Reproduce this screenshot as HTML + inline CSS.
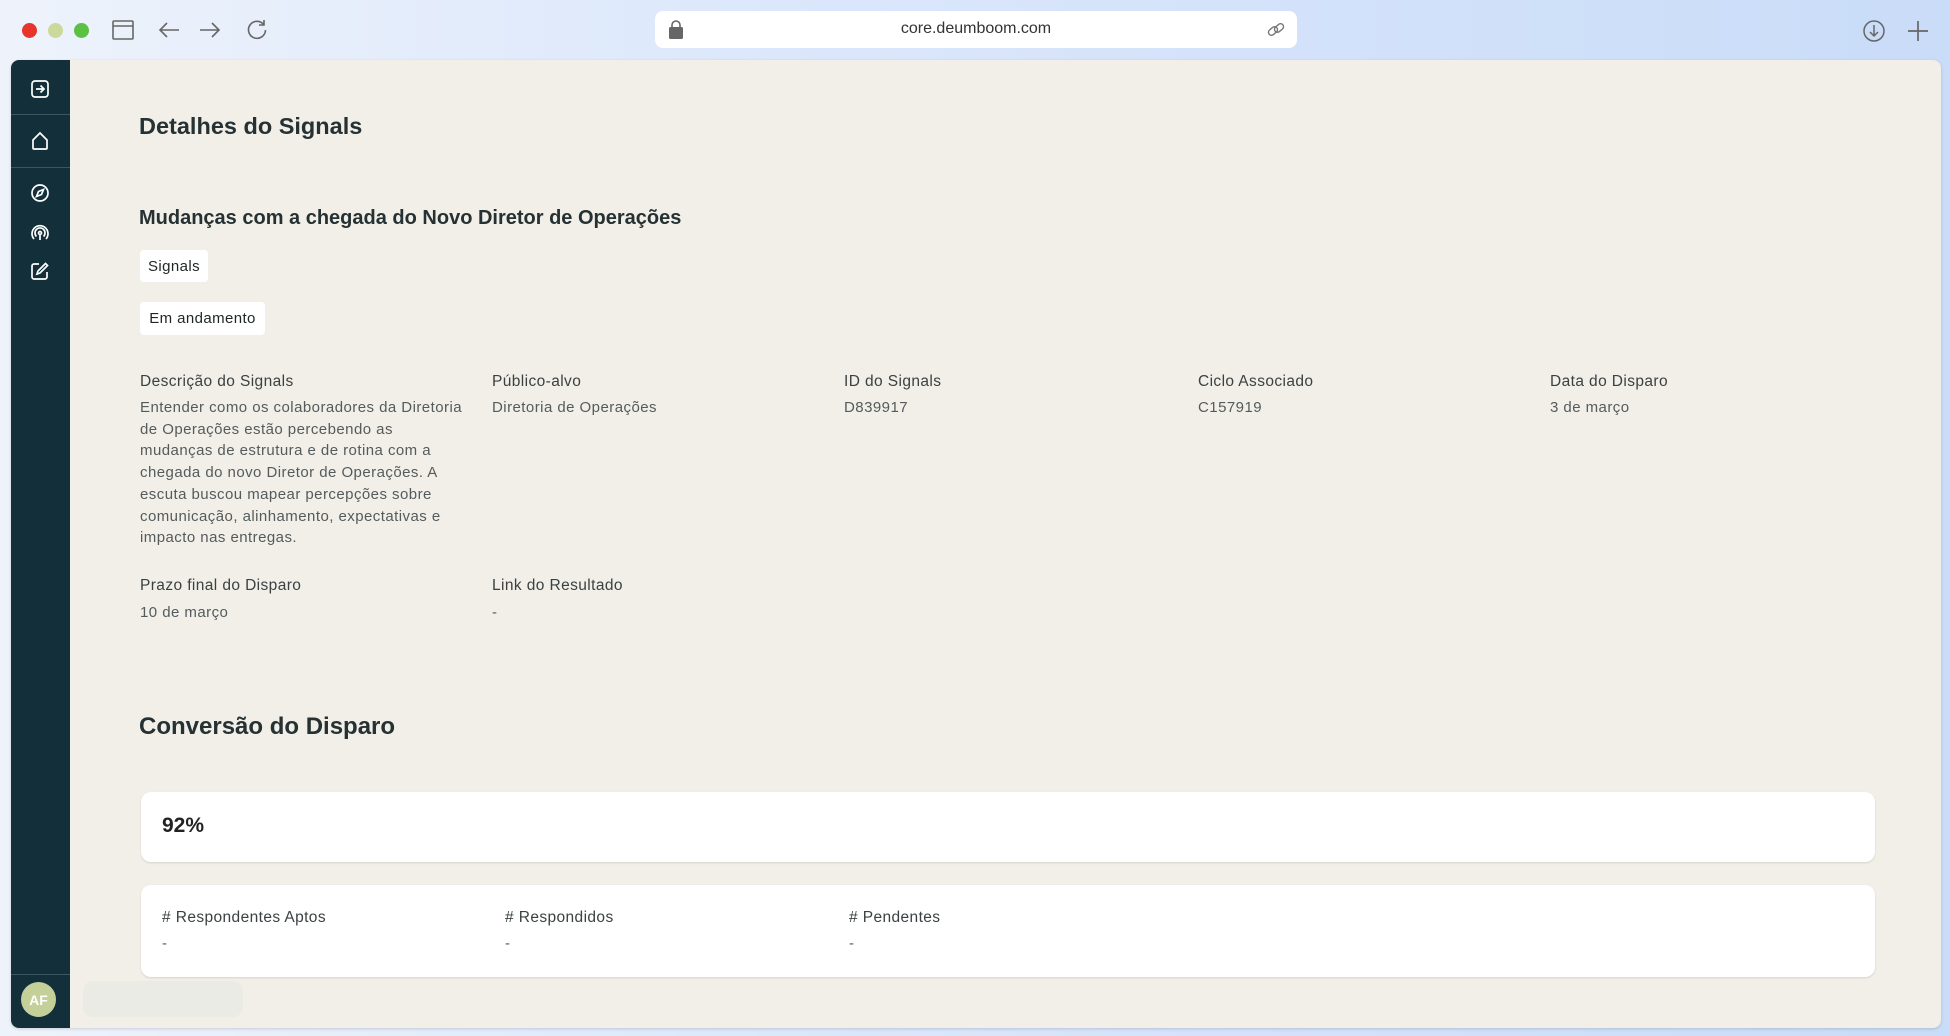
<!DOCTYPE html>
<html><head><meta charset="utf-8"><style>
*{box-sizing:border-box;margin:0;padding:0}
body{width:1950px;height:1036px;overflow:hidden;font-family:"Liberation Sans",sans-serif;background:linear-gradient(90deg,#eef3fb 0%,#dbe7fb 40%,#c9dcf8 100%);position:relative;color:#2b3233}
.abs{position:absolute}
.dot{position:absolute;top:23px;width:15px;height:15px;border-radius:50%}
.win{position:absolute;left:11px;top:60px;width:1930px;height:968px;background:#f1efe8;border-radius:8px;overflow:hidden;box-shadow:0 1px 3px rgba(0,0,0,.15)}
.side{position:absolute;left:0;top:0;width:59px;height:100%;background:#13303a}
.sep{position:absolute;left:0;width:59px;height:1px;background:#3d565e}
.ico{position:absolute;left:19px}
.lab{position:absolute;font-size:15.5px;color:#3b4142;letter-spacing:0.4px}
.val{position:absolute;font-size:15px;color:#555b5c;line-height:21.7px;letter-spacing:0.45px}
.tag{position:absolute;background:#fff;border-radius:4px;font-size:15px;color:#1f2626;display:flex;align-items:center;justify-content:center;letter-spacing:0.4px}
.card{position:absolute;left:130px;width:1734px;background:#fff;border-radius:10px;box-shadow:0 1px 2px rgba(0,0,0,.12)}
h{position:absolute;font-weight:bold;color:#263133}
</style></head><body>
<div class="dot" style="left:22px;background:#e8352b"></div>
<div class="dot" style="left:48px;background:#cdd99a"></div>
<div class="dot" style="left:74px;background:#5ac142"></div>
<svg class="abs" style="left:112px;top:20px" width="22" height="20" viewBox="0 0 22 20" fill="none" stroke="#666" stroke-width="1.6"><rect x="1" y="1" width="20" height="18" rx="1"/><line x1="1" y1="6" x2="21" y2="6"/></svg>
<svg class="abs" style="left:158px;top:20px" width="22" height="20" viewBox="0 0 22 20" fill="none" stroke="#666" stroke-width="1.6"><path d="M21 10H2M9 3L2 10l7 7"/></svg>
<svg class="abs" style="left:199px;top:20px" width="22" height="20" viewBox="0 0 22 20" fill="none" stroke="#666" stroke-width="1.6"><path d="M1 10h19M13 3l7 7-7 7"/></svg>
<svg class="abs" style="left:246px;top:19px" width="22" height="22" viewBox="0 0 22 22" fill="none" stroke="#666" stroke-width="1.6"><path d="M18 6A8.5 8.5 0 1 0 19.5 11M18 1v5h-5"/></svg>
<div class="abs" style="left:655px;top:11px;width:642px;height:37px;background:#fff;border-radius:8px"></div>
<svg class="abs" style="left:668px;top:20px" width="16" height="19" viewBox="0 0 16 19"><path d="M4 7V5a4 4 0 0 1 8 0v2" fill="none" stroke="#666" stroke-width="1.6"/><rect x="1" y="7" width="14" height="12" rx="1.5" fill="#666"/></svg>
<div class="abs" style="left:655px;width:642px;top:20px;text-align:center;font-size:16px;color:#333">core.deumboom.com</div>
<svg class="abs" style="left:1266px;top:21px" width="20" height="18" viewBox="0 0 20 18" fill="none" stroke="#777" stroke-width="1.4"><rect x="2" y="7" width="10" height="6" rx="3" transform="rotate(-40 7 10)"/><rect x="8" y="4" width="10" height="6" rx="3" transform="rotate(-40 13 7)"/></svg>
<svg class="abs" style="left:1862px;top:19px" width="24" height="24" viewBox="0 0 24 24" fill="none" stroke="#666" stroke-width="1.5"><circle cx="12" cy="12" r="10"/><path d="M12 6v11M8 13l4 4 4-4"/></svg>
<svg class="abs" style="left:1907px;top:20px" width="22" height="22" viewBox="0 0 22 22" stroke="#666" stroke-width="1.7"><path d="M11 1v20M1 11h20"/></svg>

<div class="win">
 <div class="side">
  <svg class="ico" style="top:19px" width="20" height="20" viewBox="0 0 20 20" fill="none" stroke="#fff" stroke-width="1.7"><rect x="2" y="2" width="16" height="16" rx="3"/><path d="M6 10h8M10.5 6.5L14 10l-3.5 3.5"/></svg>
  <div class="sep" style="top:54px"></div>
  <svg class="ico" style="top:71px" width="20" height="20" viewBox="0 0 20 20" fill="none" stroke="#fff" stroke-width="1.7"><path d="M3 9l7-7 7 7v8a1 1 0 0 1-1 1H4a1 1 0 0 1-1-1z"/></svg>
  <div class="sep" style="top:107px"></div>
  <svg class="ico" style="top:123px" width="20" height="20" viewBox="0 0 20 20" fill="none" stroke="#fff" stroke-width="1.7"><circle cx="10" cy="10" r="8"/><path d="M13.5 6.5l-2 5-5 2 2-5z"/></svg>
  <svg class="ico" style="top:163px" width="20" height="20" viewBox="0 0 20 20" fill="none" stroke="#fff" stroke-width="1.7"><path d="M4 16a8 8 0 1 1 12 0M6.5 13.5a5 5 0 1 1 7 0"/><circle cx="10" cy="10" r="1.5"/><path d="M10 12v5"/></svg>
  <svg class="ico" style="top:201px" width="20" height="20" viewBox="0 0 20 20" fill="none" stroke="#fff" stroke-width="1.7"><path d="M9 3H4a2 2 0 0 0-2 2v11a2 2 0 0 0 2 2h11a2 2 0 0 0 2-2v-5"/><path d="M15.5 2.5l2 2L10 12l-3 1 1-3z"/></svg>
  <div class="sep" style="top:914px"></div>
  <div class="abs" style="left:10px;top:922px;width:35px;height:35px;border-radius:50%;background:#c5cf98;color:#fff;font-size:14px;font-weight:bold;display:flex;align-items:center;justify-content:center">AF</div>
 </div>
 <div class="abs" style="left:72px;top:921px;width:160px;height:36px;border-radius:10px;background:#ebebe6"></div>

 <h style="left:128px;top:53px;font-size:23.5px">Detalhes do Signals</h>
 <h style="left:128px;top:147px;font-size:20px">Mudanças com a chegada do Novo Diretor de Operações</h>
 <div class="tag" style="left:129px;top:190px;width:68px;height:32px">Signals</div>
 <div class="tag" style="left:129px;top:242px;width:125px;height:33px">Em andamento</div>

 <div class="lab" style="left:129px;top:313px">Descrição do Signals</div>
 <div class="val" style="left:129px;top:337px;width:324px">Entender como os colaboradores da Diretoria de Operações estão percebendo as mudanças de estrutura e de rotina com a chegada do novo Diretor de Operações. A escuta buscou mapear percepções sobre comunicação, alinhamento, expectativas e impacto nas entregas.</div>
 <div class="lab" style="left:481px;top:313px">Público-alvo</div>
 <div class="val" style="left:481px;top:337px">Diretoria de Operações</div>
 <div class="lab" style="left:833px;top:313px">ID do Signals</div>
 <div class="val" style="left:833px;top:337px">D839917</div>
 <div class="lab" style="left:1187px;top:313px">Ciclo Associado</div>
 <div class="val" style="left:1187px;top:337px">C157919</div>
 <div class="lab" style="left:1539px;top:313px">Data do Disparo</div>
 <div class="val" style="left:1539px;top:337px">3 de março</div>
 <div class="lab" style="left:129px;top:517px">Prazo final do Disparo</div>
 <div class="val" style="left:129px;top:542px">10 de março</div>
 <div class="lab" style="left:481px;top:517px">Link do Resultado</div>
 <div class="val" style="left:481px;top:542px">-</div>

 <h style="left:128px;top:653px;font-size:24px">Conversão do Disparo</h>
 <div class="card" style="top:732px;height:70px"><div class="abs" style="left:21px;top:22px;font-size:21px;font-weight:bold;color:#222">92%</div></div>
 <div class="card" style="top:825px;height:92px">
  <div class="lab" style="left:21px;top:24px">#&nbsp;Respondentes Aptos</div><div class="val" style="left:21px;top:48px">-</div>
  <div class="lab" style="left:364px;top:24px">#&nbsp;Respondidos</div><div class="val" style="left:364px;top:48px">-</div>
  <div class="lab" style="left:708px;top:24px">#&nbsp;Pendentes</div><div class="val" style="left:708px;top:48px">-</div>
 </div>
</div>
</body></html>
